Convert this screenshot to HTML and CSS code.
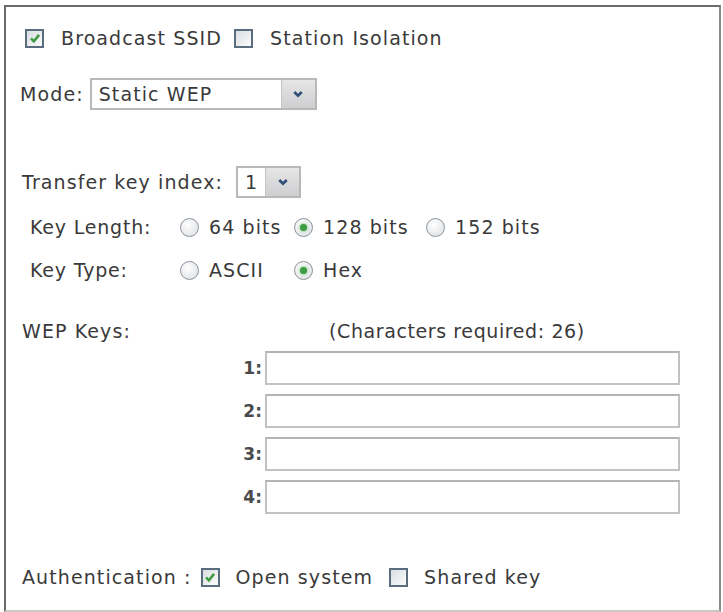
FILE: index.html
```html
<!DOCTYPE html>
<html lang="en">
<head>
    <meta charset="UTF-8">
    <title>Wireless Security</title>
    <link rel="stylesheet" href="styles.css">
</head>
<body>
    <div class="panel">
        <div class="row options">
            <label class="opt">
                <span class="box checked"><svg viewBox="0 0 12 12"><path d="M2.6 6.3 L5 8.8 L9.5 3.3" /></svg></span>
                Broadcast SSID
            </label>
            <label class="opt">
                <span class="box"></span>
                Station Isolation
            </label>
        </div>

        <div class="row mode">
            <span class="lbl">Mode:</span>
            <div class="select wide">
                <span class="value">Static WEP</span>
                <span class="arrow"><svg viewBox="0 0 12 12"><path d="M2.8 4.2 L6 7.4 L9.2 4.2" /></svg></span>
            </div>
        </div>

        <div class="row keyindex">
            <span class="lbl">Transfer key index:</span>
            <div class="select small">
                <span class="value">1</span>
                <span class="arrow"><svg viewBox="0 0 12 12"><path d="M2.8 4.2 L6 7.4 L9.2 4.2" /></svg></span>
            </div>
        </div>

        <div class="radios">
            <span class="lbl">Key Length:</span>
            <label class="opt"><span class="radio"></span>64 bits</label>
            <label class="opt"><span class="radio on"></span>128 bits</label>
            <label class="opt"><span class="radio"></span>152 bits</label>

            <span class="lbl">Key Type:</span>
            <label class="opt"><span class="radio"></span>ASCII</label>
            <label class="opt"><span class="radio on"></span>Hex</label>
        </div>

        <div class="wep-head">
            <span class="lbl">WEP Keys:</span>
            <span class="hint">(Characters required: 26)</span>
        </div>
        <div class="keys">
            <div class="key"><span class="num">1:</span><input type="text"></div>
            <div class="key"><span class="num">2:</span><input type="text"></div>
            <div class="key"><span class="num">3:</span><input type="text"></div>
            <div class="key"><span class="num">4:</span><input type="text"></div>
        </div>

        <div class="row auth">
            <span class="lbl">Authentication :</span>
            <label class="opt">
                <span class="box checked"><svg viewBox="0 0 12 12"><path d="M2.6 6.3 L5 8.8 L9.5 3.3" /></svg></span>
                Open system
            </label>
            <label class="opt">
                <span class="box"></span>
                Shared key
            </label>
        </div>
    </div>
</body>
</html>
```

FILE: styles.css
```css
body {
    margin: 0;
    background: #ffffff;
    font-family: "DejaVu Sans", Verdana, sans-serif;
    font-size: 19px;
    letter-spacing: 1.1px;
    color: #3a3a3a;
}
.panel {
    box-sizing: border-box;
    width: 717px;
    height: 607px;
    margin: 5px 0 0 4px;
    border: 2px solid #6a6a6a;
    border-right-color: #8a8a8a;
    border-bottom-color: #c8c8c8;
    padding: 19px 0 0 14px;
}
.row {
    display: flex;
    align-items: center;
    height: 24px;
}
.opt {
    display: flex;
    align-items: center;
}
.options {
    padding-left: 5px;
}
.options .opt + .opt {
    margin-left: 12px;
}
.box {
    box-sizing: border-box;
    width: 19px;
    height: 19px;
    margin-right: 17px;
    border: 2px solid #5a6d7e;
    background: linear-gradient(135deg, #d9dee2, #fbfbfb);
    display: flex;
    align-items: center;
    justify-content: center;
}
.box svg {
    width: 14px;
    height: 14px;
}
.box svg path {
    fill: none;
    stroke: #3f9b3f;
    stroke-width: 2.2;
}

/* select boxes */
.mode {
    height: 32px;
    margin-top: 28px;
}
.mode .lbl {
    margin-right: 6px;
}
.select {
    box-sizing: border-box;
    height: 32px;
    display: flex;
    border: 2px solid #b8b8b8;
    background: #fff;
}
.select .value {
    flex: 1;
    padding-left: 7px;
    line-height: 28px;
}
.select .arrow {
    width: 33px;
    border-left: 1px solid #c4c4c4;
    background: linear-gradient(#e6e6e6, #cdced0);
    display: flex;
    align-items: center;
    justify-content: center;
}
.select .arrow svg {
    width: 14px;
    height: 14px;
}
.select .arrow svg path {
    fill: none;
    stroke: #2f4f78;
    stroke-width: 2.4;
}
.wide {
    width: 227px;
}
.small {
    width: 65px;
}
.keyindex {
    height: 32px;
    margin-top: 56px;
    padding-left: 2px;
}
.keyindex .lbl {
    margin-right: 13px;
}

/* radio rows */
.radios {
    display: grid;
    grid-template-columns: 150px 114px 132px auto;
    grid-auto-rows: 24px;
    row-gap: 19px;
    margin-top: 17px;
    padding-left: 10px;
    align-items: center;
}
.radios .lbl {
    letter-spacing: 0.8px;
}
.radio {
    box-sizing: border-box;
    width: 19px;
    height: 19px;
    margin-right: 10px;
    border: 1.5px solid #8c929b;
    border-radius: 50%;
    background: radial-gradient(circle at 40% 35%, #ffffff, #d9dce0);
    display: flex;
    align-items: center;
    justify-content: center;
}
.radio.on::after {
    content: "";
    width: 7px;
    height: 7px;
    border-radius: 50%;
    background: #3d9c44;
    box-shadow: 0 0 2px 1px #acd8a9;
}

/* WEP keys */
.wep-head {
    display: flex;
    align-items: center;
    height: 24px;
    margin-top: 37px;
    padding-left: 2px;
}
.wep-head .lbl {
    width: 307px;
}
.wep-head .hint {
    letter-spacing: 0.6px;
}
.keys {
    display: flex;
    flex-direction: column;
    gap: 9px;
    margin-top: 8px;
}
.key {
    display: flex;
    align-items: center;
    justify-content: flex-end;
    width: 660px;
}
.num {
    font-size: 17px;
    font-weight: bold;
    color: #4a4a4a;
    letter-spacing: 0;
    margin-right: 3px;
}
.key input {
    box-sizing: border-box;
    width: 415px;
    height: 34px;
    margin: 0;
    border: 2px solid #c2c2c2;
    border-top-color: #b4b4b4;
    background: #fff;
}

.auth {
    margin-top: 51px;
    padding-left: 2px;
}
.auth .lbl {
    margin-right: 9px;
}
.auth .box {
    margin-right: 16px;
}
.auth .opt + .opt {
    margin-left: 16px;
}
```
